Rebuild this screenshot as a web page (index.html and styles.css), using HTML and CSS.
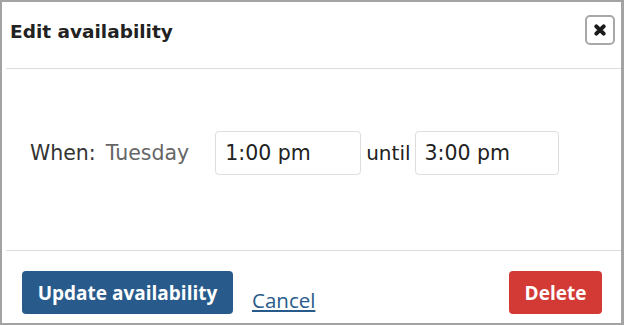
FILE: index.html
```html
<!DOCTYPE html>
<html>
<head>
<meta charset="utf-8">
<link rel="stylesheet" href="styles.css">
</head>
<body>
<div class="window">
  <div class="dialog">
    <div class="header">
      <h1 class="title">Edit availability</h1>
      <button class="close" aria-label="Close">
        <svg width="14" height="14" viewBox="0 0 14 14"><path d="M3.3 3.3 L10.7 10.7 M10.7 3.3 L3.3 10.7" stroke="#1a1a1a" stroke-width="4" stroke-linecap="round"/></svg>
      </button>
    </div>
    <div class="body">
      <div class="row">
        <span class="label">When:</span>
        <span class="day">Tuesday</span>
        <span class="input">1:00 pm</span>
        <span class="until">until</span>
        <span class="input">3:00 pm</span>
      </div>
    </div>
    <div class="footer">
      <button class="btn btn-primary">Update availability</button>
      <a class="cancel" href="#">Cancel</a>
      <span class="spacer"></span>
      <button class="btn btn-danger">Delete</button>
    </div>
  </div>
</div>
</body>
</html>
```
FILE: styles.css
```css
* { box-sizing: border-box; }
html, body { margin: 0; padding: 0; background: #fff; }
.window {
  width: 624px;
  height: 325px;
  border-style: solid;
  border-color: #a3a3a3;
  border-width: 2px 3px 2px 2px;
  background: #fff;
  display: flex;
  flex-direction: column;
}
.dialog {
  margin-left: 4px;
  flex: 1;
  display: flex;
  flex-direction: column;
}
.header {
  height: 67px;
  border-bottom: 1px solid #dcdcdc;
  display: flex;
  align-items: flex-start;
  justify-content: space-between;
  padding: 13px 6px 0 4px;
}
.title {
  margin: 6px 0 0 0;
  font-family: "DejaVu Sans", sans-serif;
  font-weight: bold;
  font-size: 18.5px;
  line-height: 21px;
  color: #222;
}
.close {
  width: 30px;
  height: 30px;
  border: 2px solid #a8a8a8;
  border-radius: 5px;
  background: #fff;
  padding: 0;
  display: flex;
  align-items: center;
  justify-content: center;
}
.body {
  height: 182px;
  border-bottom: 1px solid #dcdcdc;
  padding: 62px 0 0 24px;
}
.row {
  display: flex;
  align-items: center;
  font-size: 20.5px;
  font-family: "DejaVu Sans", sans-serif;
}
.label {
  color: #333;
  margin-right: 10px;
}
.day {
  color: #666;
  margin-right: 26px;
}
.input {
  display: flex;
  align-items: center;
  height: 44px;
  width: 146px;
  border: 1px solid #dedede;
  border-radius: 4px;
  padding-left: 9px;
  font-size: 20.5px;
  color: #222;
}
.until {
  color: #222;
  font-size: 20px;
  margin: 0 4px 0 5px;
}
.input + .until + .input { width: 144px; }
.footer {
  flex: 1;
  display: flex;
  align-items: flex-end;
  padding: 19px 19px 9px 16px;
}
.btn {
  height: 43px;
  border: none;
  border-radius: 4px;
  color: #fff;
  font-family: "Open Sans", sans-serif;
  font-weight: bold;
  font-size: 19px;
  padding: 0 10px;
}
.btn-primary { background: #285b8b; width: 211px; }
.btn-danger { background: #d33a36; width: 93px; }
.cancel {
  margin-left: 19px;
  font-family: "Open Sans", sans-serif;
  font-size: 20.5px;
  color: #285b8b;
  text-decoration: underline;
  line-height: 25px;
  margin-bottom: 1px;
}
.spacer { flex: 1; }
```
